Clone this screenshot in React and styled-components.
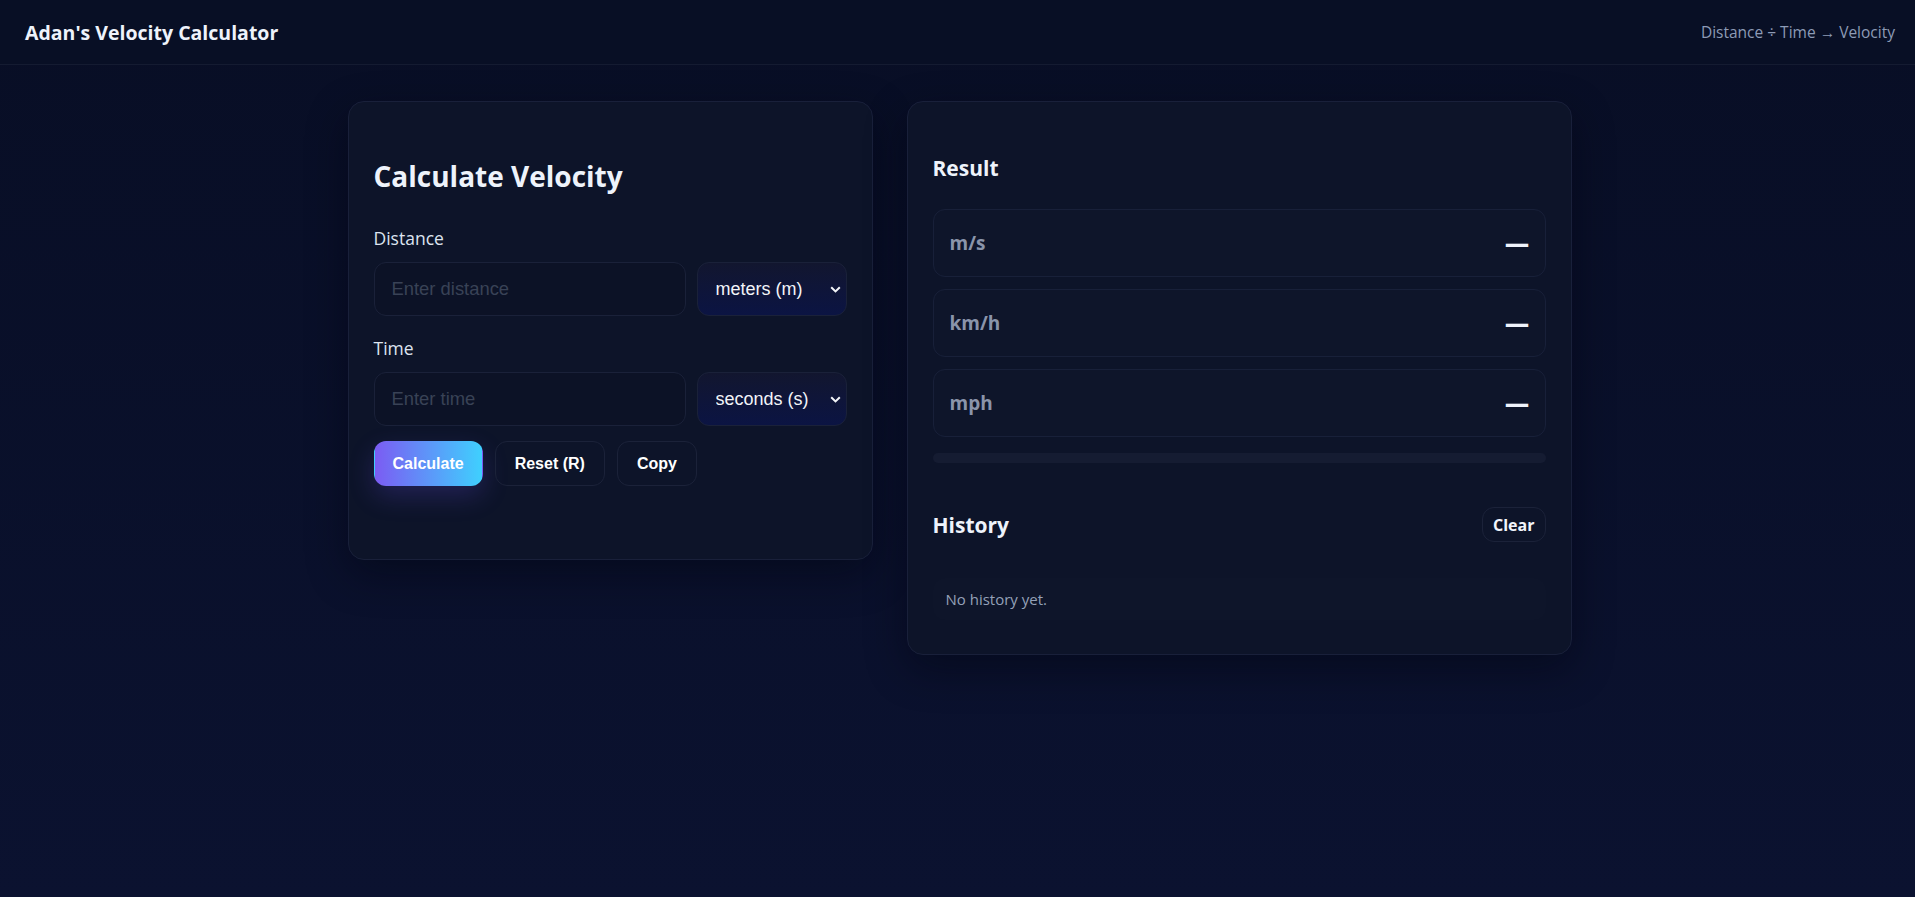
import React, { useState } from "react";
import styled, { createGlobalStyle } from "styled-components";

const GlobalStyle = createGlobalStyle`
  * { box-sizing: border-box; }
  html, body { margin: 0; padding: 0; }
  body {
    min-height: 100vh;
    background: linear-gradient(180deg, #080e25 0%, #0b1230 100%);
    color: #e6edf9;
    font-family: "Open Sans", "Noto Sans", sans-serif;
  }
`;

const Page = styled.div`
  min-height: 100vh;
`;

const TopBar = styled.header`
  height: 65px;
  display: flex;
  align-items: center;
  justify-content: space-between;
  padding: 0 20px 0 25px;
  border-bottom: 1px solid #141b31;
  background: rgba(9, 15, 38, 0.9);
`;

const Brand = styled.div`
  font-size: 19.5px;
  font-weight: 700;
  color: #eef3fb;
`;

const Formula = styled.div`
  font-size: 15.5px;
  color: #8d9bb6;
`;

const Main = styled.main`
  display: grid;
  grid-template-columns: 525px 665px;
  gap: 34px;
  justify-content: center;
  align-items: start;
  padding-top: 36px;
  padding-left: 4px;
`;

const Card = styled.section`
  background: #0d1429;
  border: 1px solid #19203a;
  border-radius: 16px;
  padding: 25px;
  box-shadow: 0 14px 40px rgba(2, 5, 16, 0.45);
`;

const Title = styled.h2`
  margin: 32px 0 0;
  font-size: 28px;
  line-height: 34px;
  font-weight: 700;
  color: #eef3fb;
`;

const Label = styled.label`
  display: block;
  margin-top: ${(p) => p.$top}px;
  font-size: 17.5px;
  line-height: 24px;
  color: #dde4f0;
`;

const InputRow = styled.div`
  display: grid;
  grid-template-columns: 1fr 150px;
  gap: 11px;
  margin-top: 12px;
`;

const TextInput = styled.input`
  height: 54px;
  width: 100%;
  padding: 0 17px;
  background: #0c1226;
  border: 1px solid #1a2139;
  border-radius: 12px;
  color: #e6edf9;
  font-family: "Liberation Sans", Arial, sans-serif;
  font-size: 18.4px;
  outline: none;

  &::placeholder {
    color: #394256;
  }
`;

const SelectWrap = styled.div`
  position: relative;
  height: 54px;
`;

const UnitSelect = styled.select`
  appearance: none;
  width: 100%;
  height: 100%;
  padding: 0 18px;
  background: linear-gradient(180deg, #12162f 0%, #0b1443 100%);
  border: 1px solid #1a2139;
  border-radius: 12px;
  color: #f2f4f8;
  font-family: "Liberation Sans", Arial, sans-serif;
  font-size: 18px;
  outline: none;
`;

const Chevron = styled.svg`
  position: absolute;
  right: 6px;
  top: 50%;
  margin-top: -3px;
  pointer-events: none;
`;

const Actions = styled.div`
  display: flex;
  gap: 12px;
  margin-top: 15px;
`;

const Button = styled.button`
  height: 45px;
  padding: 0 ${(p) => (p.$primary ? 18 : 19)}px;
  border-radius: 12px;
  font-family: "Liberation Sans", Arial, sans-serif;
  font-size: 16px;
  font-weight: 700;
  color: #ffffff;
  cursor: pointer;
  border: 1px solid ${(p) => (p.$primary ? "transparent" : "#1b2239")};
  background: ${(p) =>
    p.$primary ? "linear-gradient(90deg, #7b5cf3 0%, #3fd0fe 100%)" : "transparent"};
  box-shadow: ${(p) => (p.$primary ? "0 10px 26px rgba(110, 80, 240, 0.22)" : "none")};
`;

const Hint = styled.div`
  margin-top: 14px;
  min-height: 34px;
  font-size: 14px;
  color: #f87171;
`;

const SubTitle = styled.h3`
  margin: ${(p) => p.$top}px 0 0;
  font-size: 21px;
  line-height: 28px;
  font-weight: 700;
  color: #eef3fb;
`;

const ResultList = styled.div`
  display: flex;
  flex-direction: column;
  gap: 12px;
  margin-top: 27px;
`;

const ResultRow = styled.div`
  height: 68px;
  display: flex;
  align-items: center;
  justify-content: space-between;
  padding: 0 15px 0 16px;
  border: 1px solid #182039;
  border-radius: 12px;
  background: rgba(255, 255, 255, 0.008);
`;

const Unit = styled.span`
  font-size: 19px;
  font-weight: 700;
  color: #8a94aa;
`;

const Value = styled.span`
  font-family: "DejaVu Sans", sans-serif;
  font-size: 25px;
  font-weight: 700;
  color: #eef2fb;
`;

const Meter = styled.div`
  height: 10px;
  margin-top: 16px;
  border-radius: 999px;
  background: #151c32;
  overflow: hidden;
`;

const MeterFill = styled.div`
  height: 100%;
  background: linear-gradient(90deg, #7b5cf3, #3fd0fe);
`;

const HistoryHead = styled.div`
  display: flex;
  align-items: center;
  justify-content: space-between;
  margin-top: 44px;
`;

const ClearButton = styled.button`
  height: 35px;
  padding: 0 10px;
  border-radius: 12px;
  border: 1px solid #1b2239;
  background: transparent;
  color: #f2f5fb;
  font-family: inherit;
  font-size: 16px;
  font-weight: 700;
  cursor: pointer;
`;

const HistoryBox = styled.div`
  margin-top: 36px;
  margin-bottom: 9px;
  padding: 0 13px;
  height: 42px;
  display: flex;
  align-items: center;
  border-radius: 12px;
  background: rgba(255, 255, 255, 0.006);
  font-size: 15px;
  color: #94a1b8;
`;

const SelectField = ({ value, onChange, options }) => (
  <SelectWrap>
    <UnitSelect value={value} onChange={(e) => onChange(e.target.value)}>
      {options.map((o) => (
        <option key={o.value} value={o.value}>
          {o.label}
        </option>
      ))}
    </UnitSelect>
    <Chevron width="11" height="7" viewBox="0 0 11 7">
      <path d="M1.2 1.2 L5.5 5.4 L9.8 1.2" fill="none" stroke="#f2f4f8" strokeWidth="2" />
    </Chevron>
  </SelectWrap>
);

const distanceUnits = [
  { value: "m", label: "meters (m)", f: 1 },
  { value: "km", label: "kilometers (km)", f: 1000 },
  { value: "mi", label: "miles (mi)", f: 1609.344 },
  { value: "ft", label: "feet (ft)", f: 0.3048 },
];

const timeUnits = [
  { value: "s", label: "seconds (s)", f: 1 },
  { value: "min", label: "minutes (min)", f: 60 },
  { value: "h", label: "hours (h)", f: 3600 },
];

export default function App() {
  const [distance, setDistance] = useState("");
  const [time, setTime] = useState("");
  const [dUnit, setDUnit] = useState("m");
  const [tUnit, setTUnit] = useState("s");
  const [speed, setSpeed] = useState(null);
  const [history, setHistory] = useState([]);
  const [error, setError] = useState("");

  const calculate = () => {
    const d = parseFloat(distance);
    const t = parseFloat(time);
    if (!(d >= 0) || !(t > 0)) {
      setError("Enter a valid distance and a time above zero.");
      return;
    }
    setError("");
    const ms =
      (d * distanceUnits.find((u) => u.value === dUnit).f) /
      (t * timeUnits.find((u) => u.value === tUnit).f);
    setSpeed(ms);
    setHistory((h) => [`${d} ${dUnit} / ${t} ${tUnit} = ${ms.toFixed(2)} m/s`, ...h]);
  };

  const reset = () => {
    setDistance("");
    setTime("");
    setSpeed(null);
    setError("");
  };

  const fmt = (v) => (speed === null ? "—" : v.toFixed(2));
  const rows = [
    { unit: "m/s", v: speed },
    { unit: "km/h", v: speed * 3.6 },
    { unit: "mph", v: speed * 2.236936 },
  ];
  const fill = speed === null ? 0 : Math.min(100, (speed / 100) * 100);

  return (
    <Page>
      <GlobalStyle />
      <TopBar>
        <Brand>Adan's Velocity Calculator</Brand>
        <Formula>Distance ÷ Time → Velocity</Formula>
      </TopBar>

      <Main>
        <Card>
          <Title>Calculate Velocity</Title>

          <Label $top={33}>Distance</Label>
          <InputRow>
            <TextInput
              type="number"
              placeholder="Enter distance"
              value={distance}
              onChange={(e) => setDistance(e.target.value)}
            />
            <SelectField value={dUnit} onChange={setDUnit} options={distanceUnits} />
          </InputRow>

          <Label $top={20}>Time</Label>
          <InputRow>
            <TextInput
              type="number"
              placeholder="Enter time"
              value={time}
              onChange={(e) => setTime(e.target.value)}
            />
            <SelectField value={tUnit} onChange={setTUnit} options={timeUnits} />
          </InputRow>

          <Actions>
            <Button $primary onClick={calculate}>
              Calculate
            </Button>
            <Button onClick={reset}>Reset (R)</Button>
            <Button onClick={() => speed !== null && navigator.clipboard?.writeText(speed.toFixed(2))}>
              Copy
            </Button>
          </Actions>
          <Hint>{error}</Hint>
        </Card>

        <Card>
          <SubTitle $top={27}>Result</SubTitle>
          <ResultList>
            {rows.map((r) => (
              <ResultRow key={r.unit}>
                <Unit>{r.unit}</Unit>
                <Value>{fmt(r.v)}</Value>
              </ResultRow>
            ))}
          </ResultList>
          <Meter>
            <MeterFill style={{ width: `${fill}%` }} />
          </Meter>

          <HistoryHead>
            <SubTitle $top={0}>History</SubTitle>
            <ClearButton onClick={() => setHistory([])}>Clear</ClearButton>
          </HistoryHead>
          <HistoryBox>
            {history.length === 0 ? "No history yet." : history[0]}
          </HistoryBox>
        </Card>
      </Main>
    </Page>
  );
}
